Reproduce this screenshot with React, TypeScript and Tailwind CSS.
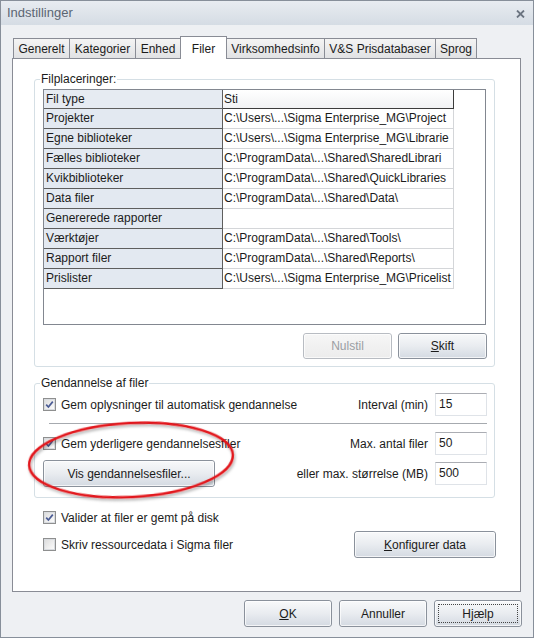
import React from "react"

const rows: [string, string][] = [
  ["Projekter", "C:\\Users\\...\\Sigma Enterprise_MG\\Project"],
  ["Egne biblioteker", "C:\\Users\\...\\Sigma Enterprise_MG\\Librarie"],
  ["Fælles biblioteker", "C:\\ProgramData\\...\\Shared\\SharedLibrari"],
  ["Kvikbiblioteker", "C:\\ProgramData\\...\\Shared\\QuickLibraries"],
  ["Data filer", "C:\\ProgramData\\...\\Shared\\Data\\"],
  ["Genererede rapporter", ""],
  ["Værktøjer", "C:\\ProgramData\\...\\Shared\\Tools\\"],
  ["Rapport filer", "C:\\ProgramData\\...\\Shared\\Reports\\"],
  ["Prislister", "C:\\Users\\...\\Sigma Enterprise_MG\\Pricelist"],
]

const tabs = [
  { label: "Generelt", w: "w-[57px]" },
  { label: "Kategorier", w: "w-[67px]" },
  { label: "Enhed", w: "w-[46px]" },
  { label: "Filer", w: "w-[47px]", active: true },
  { label: "Virksomhedsinfo", w: "w-[99px]" },
  { label: "V&S Prisdatabaser", w: "w-[112px]" },
  { label: "Sprog", w: "w-[42px]" },
]

const Btn = ({
  children,
  className = "",
  disabled = false,
  focus = false,
}: {
  children: React.ReactNode
  className?: string
  disabled?: boolean
  focus?: boolean
}) => (
  <div
    className={`relative flex shrink-0 items-center justify-center rounded-[3px] border ${
      disabled
        ? "border-[#b8bcc2] bg-gradient-to-b from-[#f6f6f6] to-[#ececec] text-[#9a9ea3]"
        : "border-[#8a919b] bg-gradient-to-b from-[#f8f9fa] via-[#e9ecf0] to-[#d4dae2] text-[#1b1b1b]"
    } ${className}`}
  >
    <span className="absolute inset-0 rounded-[2px] border border-white/70" />
    {focus && <span className="absolute inset-[3px] border border-dotted border-[#444]" />}
    <span className="relative">{children}</span>
  </div>
)

const Check = ({ checked }: { checked?: boolean }) => (
  <span className="flex h-[13px] w-[13px] shrink-0 items-center justify-center border border-[#8e8f8f] bg-white">
    <span className="flex h-[11px] w-[11px] items-center justify-center border border-[#d9dce0] bg-gradient-to-br from-[#dedede] to-[#fbfbfb]">
      {checked && (
        <svg width="9" height="9" viewBox="0 0 9 9">
          <path d="M1.2 4.6 L3.4 7 L7.8 1.6" fill="none" stroke="#4b5c95" strokeWidth="1.7" />
        </svg>
      )}
    </span>
  </span>
)

const Input = ({ value }: { value: string }) => (
  <div className="h-[23px] w-[52px] shrink-0 border border-[#dfe3e8] border-t-[#abadb3] bg-white pl-[3px] text-[12px] leading-[21px] text-[#1b1b1b]">
    {value}
  </div>
)

export default function App() {
  return (
    <div className="relative flex h-[638px] w-[534px] flex-col border border-[#878f9a] bg-[#eef0f3] font-['Liberation_Sans',Arial,sans-serif] text-[12px] text-[#1b1b1b]">
      {/* title bar */}
      <div className="flex h-[24px] shrink-0 items-center justify-between bg-gradient-to-b from-[#e8ecf1] to-[#d5dce4] pl-[6px] pr-[8px]">
        <span className="text-[13px] text-[#5b6573]">Indstillinger</span>
        <svg width="9" height="8" viewBox="0 0 9 8" className="mt-[1px]">
          <path d="M1 0.5 L8 7.5 M8 0.5 L1 7.5" stroke="#6b7480" strokeWidth="1.8" />
        </svg>
      </div>

      <div className="flex flex-1 flex-col px-[11px]">
        {/* tabs */}
        <div className="mt-[11px] flex h-[22px] items-end pl-[1px]">
          {tabs.map((t) =>
            t.active ? (
              <div
                key={t.label}
                className={`relative z-10 -mb-px -mr-px flex h-[23px] items-start justify-center border border-b-0 border-[#898c95] bg-white pt-[3px] ${t.w}`}
              >
                {t.label}
              </div>
            ) : (
              <div
                key={t.label}
                className={`-mr-px flex h-[20px] items-center justify-center border border-b-0 border-[#898c95] bg-gradient-to-b from-[#f4f4f4] to-[#e1e2e4] ${t.w}`}
              >
                {t.label}
              </div>
            )
          )}
        </div>

        {/* panel */}
        <div className="h-[534px] w-[509px] border border-[#898c95] bg-white pl-[21px] pt-[20px]">
          {/* Filplaceringer */}
          <div className="relative h-[288px] w-[461px] rounded-[3px] border border-[#d5dfe5] pl-[8px] pt-[9px]">
            <span className="absolute -top-[8px] left-[5px] bg-white px-[1px] leading-[14px]">Filplaceringer:</span>
            <div className="h-[236px] w-[443px] border border-[#828790] bg-white">
              <div className="flex h-[19px]">
                <div className="w-[179px] border-b border-r border-[#5e5e5e] bg-[#e6ebf2] pl-[2px] leading-[18px]">Fil type</div>
                <div className="w-[231px] border-b border-r border-[#3c3c3c] bg-gradient-to-b from-[#ffffff] to-[#f1f2f4] pl-[1px] leading-[18px]">Sti</div>
              </div>
              {rows.map(([a, b]) => (
                <div key={a} className="flex h-[20px]">
                  <div className="w-[179px] border-b border-r border-[#5e5e5e] bg-[#e3e9f1] pl-[2px] leading-[19px]">{a}</div>
                  <div className="w-[231px] whitespace-nowrap border-b border-r border-[#d4d6d9] pl-[1px] leading-[19px]">{b}</div>
                </div>
              ))}
            </div>
            <div className="mt-[8px] flex justify-end gap-[6px] pr-[7px]">
              <Btn disabled className="h-[26px] w-[89px]">Nulstil</Btn>
              <Btn className="h-[26px] w-[89px]">
                <u>S</u>kift
              </Btn>
            </div>
          </div>

          {/* Gendannelse af filer */}
          <div className="relative mt-[16px] flex h-[115px] w-[461px] flex-col rounded-[3px] border border-[#d5dfe5] pl-[8px] pr-[7px] pt-[9px]">
            <span className="absolute -top-[8px] left-[5px] bg-white px-[1px] leading-[14px]">Gendannelse af filer</span>
            <div className="flex h-[23px] items-center">
              <Check checked />
              <span className="ml-[5px]">Gem oplysninger til automatisk gendannelse</span>
              <div className="ml-auto flex items-center gap-[7px]">
                <span>Interval (min)</span>
                <Input value="15" />
              </div>
            </div>
            <div className="ml-[6px] mt-[7px] h-px bg-[#a6aaaf]" />
            <div className="mt-[8px] flex h-[23px] items-center">
              <Check checked />
              <span className="ml-[5px]">Gem yderligere gendannelsesfiler</span>
              <div className="ml-auto flex items-center gap-[7px]">
                <span>Max. antal filer</span>
                <Input value="50" />
              </div>
            </div>
            <div className="mt-[5px] flex h-[27px] items-center">
              <Btn className="h-[27px] w-[172px]">Vis gendannelsesfiler...</Btn>
              <div className="ml-auto flex items-center gap-[7px]">
                <span>eller max. størrelse (MB)</span>
                <Input value="500" />
              </div>
            </div>
          </div>

          <div className="ml-[9px] mt-[6px] flex h-[27px] w-[453px] items-center">
            <Check checked />
            <span className="ml-[5px]">Valider at filer er gemt på disk</span>
          </div>
          <div className="ml-[9px] flex h-[27px] w-[453px] items-center">
            <Check />
            <span className="ml-[5px]">Skriv ressourcedata i Sigma filer</span>
            <Btn className="ml-auto h-[27px] w-[142px]">
              <u>K</u>onfigurer data
            </Btn>
          </div>
        </div>

        {/* footer buttons */}
        <div className="mt-[8px] flex justify-end gap-[7px]">
          <Btn className="h-[27px] w-[88px]">
            <u>O</u>K
          </Btn>
          <Btn className="h-[27px] w-[88px]">Annuller</Btn>
          <Btn focus className="h-[27px] w-[88px]">Hjælp</Btn>
        </div>
      </div>

      {/* red annotation */}
      <svg className="pointer-events-none absolute -left-px -top-px" width="534" height="638">
        <defs>
          <filter id="sh" x="-10%" y="-20%" width="120%" height="150%">
            <feDropShadow dx="1" dy="2" stdDeviation="1.5" floodColor="#000" floodOpacity="0.35" />
          </filter>
        </defs>
        <ellipse
          cx="131"
          cy="460"
          rx="102"
          ry="37"
          transform="rotate(-3 131 460)"
          fill="none"
          stroke="#e2161a"
          strokeWidth="2.4"
          filter="url(#sh)"
        />
      </svg>
    </div>
  )
}
